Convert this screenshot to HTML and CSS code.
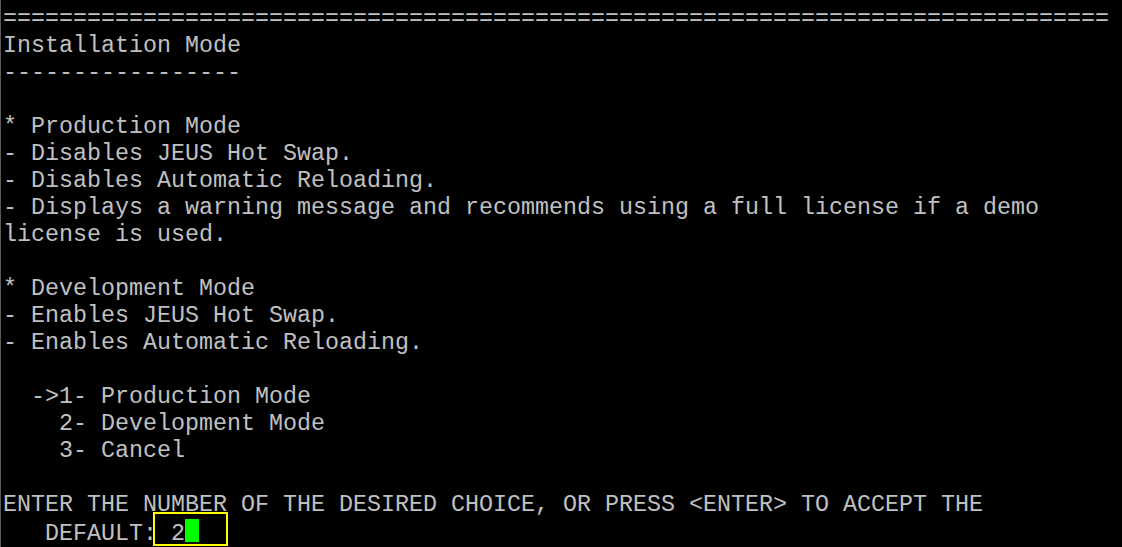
FILE: index.html
```html
<!DOCTYPE html>
<html>
<head>
<meta charset="utf-8">
<link rel="stylesheet" href="styles.css">
</head>
<body>
<div class="term">
<pre class="screen">===============================================================================
Installation Mode
-----------------

* Production Mode
- Disables JEUS Hot Swap.
- Disables Automatic Reloading.
- Displays a warning message and recommends using a full license if a demo
license is used.

* Development Mode
- Enables JEUS Hot Swap.
- Enables Automatic Reloading.

  -&gt;1- Production Mode
    2- Development Mode
    3- Cancel

ENTER THE NUMBER OF THE DESIRED CHOICE, OR PRESS &lt;ENTER&gt; TO ACCEPT THE
   DEFAULT: 2<span class="cursor"></span></pre>
<div class="highlight"></div>
</div>
</body>
</html>
```
FILE: styles.css
```css
html, body {
  margin: 0;
  padding: 0;
  background: #000;
}
.term {
  position: relative;
  min-height: 547px;
  box-sizing: border-box;
  border-left: 1px solid #5a5a5a;
  padding: 6px 0 0 2px;
  background: #000;
}
.screen {
  margin: 0;
  font-family: "Liberation Mono", "Courier New", monospace;
  font-size: 23.33px;
  line-height: 27px;
  color: #c0c0c0;
  white-space: pre;
}
.cursor {
  display: inline-block;
  width: 14px;
  height: 23px;
  background: #00ff00;
  vertical-align: -2px;
}
.highlight {
  position: absolute;
  left: 152px;
  top: 512px;
  width: 75px;
  height: 34px;
  box-sizing: border-box;
  border: 2px solid #ffff00;
}
```
